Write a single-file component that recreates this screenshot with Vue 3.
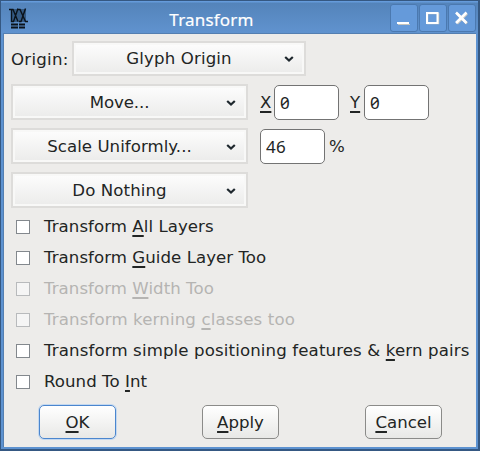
<script setup>
import { ref } from 'vue'

const transforms = [
  { label: 'Move...', kind: 'xy', tone: 'move' },
  { label: 'Scale Uniformly...', kind: 'percent', tone: 'scale' },
  { label: 'Do Nothing', kind: 'none', tone: 'nothing' },
]
const x = ref('0')
const y = ref('0')
const scale = ref('46')

const options = [
  { before: 'Transform ', key: 'A', after: 'll Layers' },
  { before: 'Transform ', key: 'G', after: 'uide Layer Too' },
  { before: 'Transform ', key: 'W', after: 'idth Too', disabled: true },
  { before: 'Transform kerning ', key: 'c', after: 'lasses too', disabled: true, loose: true },
  { before: 'Transform simple positioning features & ', key: 'k', after: 'ern pairs', loose: true },
  { before: 'Round To ', key: 'I', after: 'nt' },
]
const buttons = [
  { key: 'O', after: 'K', primary: true },
  { key: 'A', after: 'pply' },
  { key: 'C', after: 'ancel' },
]
</script>

<template>
  <div class="window">
    <header class="titlebar">
      <svg class="logo" width="20" height="22" viewBox="0 0 20 22">
        <rect x="2" y="2" width="15" height="13" fill="#1d3a5a" opacity=".6" />
        <path d="M0 2.500h4L9 14.500M8 2.500h3l5.500 12H19M2.500 3v11.500h2L9 1.500M10 14.500h2L16.500 1.500" fill="none" stroke="#0b131b" stroke-width="1.400" />
        <path d="M2 17.500h7M10 17.500h6M2 20.500h7M10 20.500h6" stroke="#0b131b" stroke-width="1.800" />
      </svg>
      <h1 class="title">Transform</h1>
      <div class="controls">
        <span class="control">
          <svg width="26" height="26" viewBox="0 0 26 26"><path d="M8 20.500h12" stroke="#c3c3bd" stroke-width="1" /><path d="M7 19h12" stroke="#fff" stroke-width="2" /></svg>
        </span>
        <span class="control">
          <svg width="26" height="26" viewBox="0 0 26 26"><path d="M8.500 9.500h11v10h-11z" fill="none" stroke="#c3c3bd" stroke-width="1.500" /><path d="M8 9h10.500v10H8z" fill="none" stroke="#fff" stroke-width="2" /></svg>
        </span>
        <span class="control">
          <svg width="26" height="26" viewBox="0 0 26 26"><path d="M9 9.500l10 10M19 9.500l-10 10" stroke="#c3c3bd" stroke-width="2.600" /><path d="M8 8.500l10.500 10.500M18.500 8.500L8 19" stroke="#fff" stroke-width="2.600" /></svg>
        </span>
      </div>
    </header>

    <main class="body">
      <div class="row origin">
        <span class="origin-label">Origin:</span>
        <div class="select">
          <span class="select-text">Glyph Origin</span>
          <svg class="arrow" width="10" height="8" viewBox="0 0 10 8"><path d="M1.200 2L5 5.500L8.800 2" fill="none" stroke="#1f282e" stroke-width="2.200" /></svg>
        </div>
      </div>

      <div v-for="t in transforms" :key="t.label" class="row">
        <div class="select wide">
          <span class="select-text" :class="t.tone">{{ t.label }}</span>
          <svg class="arrow" width="10" height="8" viewBox="0 0 10 8"><path d="M1.200 2L5 5.500L8.800 2" fill="none" stroke="#1f282e" stroke-width="2.200" /></svg>
        </div>
        <div v-if="t.kind === 'xy'" class="fields">
          <label class="axis"><span class="key">X</span></label>
          <input v-model="x" class="field">
          <label class="axis second"><span class="key">Y</span></label>
          <input v-model="y" class="field">
        </div>
        <div v-if="t.kind === 'percent'" class="fields">
          <input v-model="scale" class="field">
          <span class="unit">%</span>
        </div>
      </div>

      <div class="checks">
        <label v-for="o in options" :key="o.key" class="check" :class="{ disabled: o.disabled, loose: o.loose }">
          <span class="box"></span>
          <span class="check-text">{{ o.before }}<span class="key">{{ o.key }}</span>{{ o.after }}</span>
        </label>
      </div>

      <div class="actions">
        <button v-for="b in buttons" :key="b.key" class="button" :class="{ primary: b.primary }">
          <span class="key">{{ b.key }}</span>{{ b.after }}
        </button>
      </div>
    </main>
  </div>
</template>

<style>
body { overflow: hidden; }
</style>

<style scoped>
.window {
  box-sizing: border-box;
  width: 480px;
  height: 451px;
  display: flex;
  flex-direction: column;
  border: solid #355882;
  border-width: 1px 2px 2px 1px;
  background: #5d92d0;
  color: #222524;
  font: 16.600px/20px "DejaVu Sans", sans-serif;
}
.titlebar {
  box-sizing: border-box;
  height: 32px;
  display: flex;
  align-items: flex-start;
  background: linear-gradient(#659bdb 0, #659bdb 1px, #5484ba 2px, #6093cf 100%);
}
.logo { margin: 6px 0 0 8px; flex: none; }
.title {
  flex: 1;
  margin: 9px 0 0 4px;
  text-align: center;
  font: 400 17px/20px "Noto Sans", sans-serif;
  letter-spacing: 0.200px;
  -webkit-text-stroke: 0.200px #fff;
  color: #fff;
}
.controls { display: flex; gap: 1px; margin: 3px 2px 0 0; }
.control {
  width: 26px;
  height: 26px;
  border: 1px solid #4b79b0;
  border-radius: 3px;
  background: #659ada;
}
.control svg { display: block; margin: -1px; }
.body {
  box-sizing: border-box;
  flex: 1;
  min-height: 0;
  margin: 0 2px 2px;
  border: solid #547fb1;
  border-width: 1px 0 0 1px;
  padding: 7px 0 0 7px;
  background: #edecea;
}
.row { display: flex; height: 36px; margin-bottom: 8px; }
.origin { height: 35px; }
.origin-label { width: 61px; line-height: 37px; letter-spacing: 0.250px; }
.select {
  box-sizing: border-box;
  width: 234px;
  height: 100%;
  display: flex;
  align-items: center;
  border: 2px solid #dddcda;
  padding-right: 10px;
  background: linear-gradient(#fdfdfd, #ebebea);
  box-shadow: inset 0 0 0 2px #f8f8f7;
}
.select.wide { width: 237px; }
.select-text { flex: 1; text-align: center; padding-top: 1px; letter-spacing: 0.150px; }
.select-text.move { letter-spacing: -0.100px; }
.select-text.scale { letter-spacing: 0.050px; }
.select-text.nothing { letter-spacing: 0.100px; }
.arrow { flex: none; margin-top: 1px; }
.fields { display: flex; margin-left: 12px; padding-top: 1px; }
.axis { width: 14px; line-height: 35px; }
.axis.second { margin-left: 11px; }
.key {
  text-decoration: underline;
  text-decoration-thickness: 2px;
  text-underline-offset: 3px;
  text-decoration-skip-ink: none;
}
.field {
  box-sizing: border-box;
  width: 65px;
  height: 35px;
  margin: 0;
  border: 1px solid #737373;
  border-radius: 5px;
  padding: 0 5px 1px;
  outline: 0;
  background: #fff;
  color: #222524;
  font: 17px "Noto Sans", sans-serif;
  font-feature-settings: "zero" 1;
  letter-spacing: 0.300px;
}
.unit { margin-left: 4px; line-height: 35px; }
.checks { display: flex; flex-direction: column; gap: 11px; margin: 9px 0 0 5px; }
.check { display: flex; align-items: center; height: 20px; white-space: nowrap; letter-spacing: 0.050px; }
.check.loose { letter-spacing: 0.130px; }
.box {
  box-sizing: border-box;
  width: 14px;
  height: 14px;
  margin-right: 14px;
  border: 1px solid #83888d;
  background: #fff;
  flex: none;
}
.check.disabled { color: #b5b4b2; }
.disabled .box { border-color: #b8babc; background: #f5f5f5; }
.actions { display: flex; gap: 86px; margin: 13px 0 0 28px; }
.button {
  box-sizing: border-box;
  width: 77px;
  height: 34px;
  padding: 1px 0 0;
  border: 1px solid #8b8b89;
  border-radius: 5px;
  background: linear-gradient(#fff, #e8e8e6);
  color: #222524;
  font: 16.600px/20px "DejaVu Sans", sans-serif;
}
.button.primary { border-color: #4b86ce; box-shadow: 0 0 0 1px #c3d8f0; }
</style>
